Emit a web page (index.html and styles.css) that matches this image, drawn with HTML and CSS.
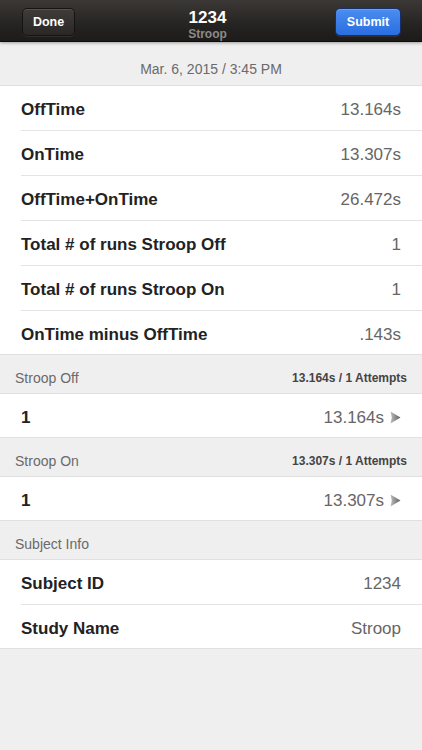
FILE: index.html
```html
<!DOCTYPE html>
<html>
<head>
<meta charset="utf-8">
<link rel="stylesheet" href="styles.css">
</head>
<body>
<div class="navbar">
  <button class="btn btn-dark">Done</button>
  <div class="title">
    <div class="title-main">1234</div>
    <div class="title-sub">Stroop</div>
  </div>
  <button class="btn btn-blue">Submit</button>
</div>
<div class="date">Mar. 6, 2015 / 3:45 PM</div>
<div class="group">
  <div class="row"><span class="label">OffTime</span><span class="value">13.164s</span></div>
  <div class="row"><span class="label">OnTime</span><span class="value">13.307s</span></div>
  <div class="row"><span class="label">OffTime+OnTime</span><span class="value">26.472s</span></div>
  <div class="row"><span class="label">Total # of runs Stroop Off</span><span class="value">1</span></div>
  <div class="row"><span class="label">Total # of runs Stroop On</span><span class="value">1</span></div>
  <div class="row"><span class="label">OnTime minus OffTime</span><span class="value">.143s</span></div>
</div>
<div class="section"><span>Stroop Off</span><span class="section-right">13.164s / 1 Attempts</span></div>
<div class="group">
  <div class="row row-link"><span class="label">1</span><span class="value">13.164s<svg class="chev" width="11" height="13" viewBox="0 0 11 13"><defs><linearGradient id="cg1" x1="0" y1="0" x2="1" y2="0"><stop offset="0" stop-color="#bdbdbd"/><stop offset="1" stop-color="#5e5e5e"/></linearGradient></defs><path d="M0.5 0.5 L10.5 6.5 L0.5 12.5 L1.8 6.5 Z" fill="url(#cg1)"/></svg></span></div>
</div>
<div class="section"><span>Stroop On</span><span class="section-right">13.307s / 1 Attempts</span></div>
<div class="group">
  <div class="row row-link"><span class="label">1</span><span class="value">13.307s<svg class="chev" width="11" height="13" viewBox="0 0 11 13"><defs><linearGradient id="cg2" x1="0" y1="0" x2="1" y2="0"><stop offset="0" stop-color="#bdbdbd"/><stop offset="1" stop-color="#5e5e5e"/></linearGradient></defs><path d="M0.5 0.5 L10.5 6.5 L0.5 12.5 L1.8 6.5 Z" fill="url(#cg2)"/></svg></span></div>
</div>
<div class="section"><span>Subject Info</span></div>
<div class="group">
  <div class="row"><span class="label">Subject ID</span><span class="value">1234</span></div>
  <div class="row"><span class="label">Study Name</span><span class="value">Stroop</span></div>
</div>
</body>
</html>
```

FILE: styles.css
```css
* { box-sizing: border-box; }
html, body { margin: 0; padding: 0; }
body {
  width: 422px;
  min-height: 750px;
  background: #efeff0;
  font-family: "Liberation Sans", Arial, sans-serif;
  color: #222;
}
.navbar {
  height: 42px;
  background: linear-gradient(#3b3836, #262422 60%, #1d1b1a);
  border-bottom: 1px solid #0e0d0c;
  box-shadow: 0 1px 3px rgba(0,0,0,0.35);
  display: flex;
  align-items: flex-start;
  justify-content: space-between;
  padding: 8px 21px 0 22px;
  position: relative;
  z-index: 1;
}
.btn {
  height: 28px;
  border-radius: 5px;
  font-family: "Liberation Sans", Arial, sans-serif;
  font-size: 12.5px;
  font-weight: bold;
  color: #fff;
  padding: 0;
}
.btn-dark {
  width: 53px;
  background: linear-gradient(#3f3c3a, #2a2827);
  border: 1px solid #151413;
  box-shadow: inset 0 1px 0 rgba(255,255,255,0.12), 0 1px 0 rgba(255,255,255,0.08);
}
.btn-blue {
  width: 66px;
  background: linear-gradient(#4b8df0, #2a6ee0);
  border: 1px solid #15306a;
  box-shadow: inset 0 1px 0 rgba(255,255,255,0.2), 0 1px 0 rgba(255,255,255,0.08);
}
.title {
  text-align: center;
  padding-top: 1px;
  margin-left: 5px;
}
.title-main {
  color: #fff;
  font-size: 17px;
  font-weight: bold;
  line-height: 17px;
}
.title-sub {
  color: #8c8a88;
  font-size: 12px;
  font-weight: bold;
  line-height: 16px;
}
.date {
  height: 44px;
  padding-top: 7px;
  line-height: 40px;
  text-align: center;
  font-size: 14px;
  color: #6a6a6a;
  background: #efeff0;
  border-bottom: 1px solid #e0e0e0;
}
.group {
  background: #fff;
  border-bottom: 1px solid #e0e0e0;
}
.row {
  height: 45px;
  margin-left: 21px;
  padding-right: 21px;
  padding-top: 4px;
  display: flex;
  align-items: center;
  justify-content: space-between;
  border-bottom: 1px solid #e4e4e4;
}
.row:last-child { border-bottom: none; height: 43px; }
.label {
  font-size: 17px;
  font-weight: bold;
  color: #222;
}
.value {
  font-size: 17px;
  color: #666;
  display: flex;
  align-items: center;
}
.row-link { padding-right: 21px; }
.chev {
  display: block;
  margin-left: 6px;
}
.section {
  height: 39px;
  padding: 8px 15px 0 15px;
  display: flex;
  align-items: center;
  justify-content: space-between;
  font-size: 14px;
  color: #6a6a6a;
  border-bottom: 1px solid #e0e0e0;
}
.section-right {
  font-size: 12px;
  font-weight: bold;
  color: #444;
}
```
